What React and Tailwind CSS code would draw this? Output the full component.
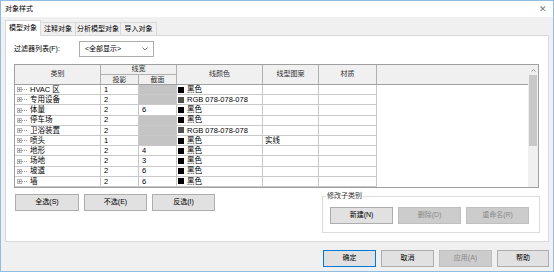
import React from "react";

const rows = [
  { name: "HVAC 区", proj: "1", cut: null, color: "黑色", sw: "#000", pattern: "" },
  { name: "专用设备", proj: "2", cut: null, color: "RGB 078-078-078", sw: "#4e4e4e", pattern: "" },
  { name: "体量", proj: "2", cut: "6", color: "黑色", sw: "#000", pattern: "" },
  { name: "停车场", proj: "2", cut: null, color: "黑色", sw: "#000", pattern: "" },
  { name: "卫浴装置", proj: "2", cut: null, color: "RGB 078-078-078", sw: "#4e4e4e", pattern: "" },
  { name: "喷头", proj: "1", cut: null, color: "黑色", sw: "#000", pattern: "实线" },
  { name: "地形", proj: "2", cut: "4", color: "黑色", sw: "#000", pattern: "" },
  { name: "场地", proj: "2", cut: "3", color: "黑色", sw: "#000", pattern: "" },
  { name: "坡道", proj: "2", cut: "6", color: "黑色", sw: "#000", pattern: "" },
  { name: "墙", proj: "2", cut: "6", color: "黑色", sw: "#000", pattern: "" },
];

const Btn = ({ children, w = "w-[64px]", disabled, focused }) => (
  <div
    className={`${w} h-[17px] flex items-center justify-center border text-[7px] ${
      disabled
        ? "bg-[#cccccc] border-[#bfbfbf] text-[#8a8a8a]"
        : focused
        ? "bg-[#e1e1e1] border-[#0078d7] text-black"
        : "bg-[#e1e1e1] border-[#adadad] text-black"
    }`}
  >
    {children}
  </div>
);

const Expander = () => (
  <div className="flex items-center ml-[2px] mr-[3px]">
    <div className="w-[5px] h-[5px] border border-[#b8b8b8] relative bg-white">
      <div className="absolute left-[0px] top-[1px] w-[3px] h-px bg-[#9a9a9a]" />
      <div className="absolute left-[1px] top-[0px] w-px h-[3px] bg-[#9a9a9a]" />
    </div>
    <div className="w-[5px] border-t border-dotted border-[#a0a0a0]" />
  </div>
);

export default function App() {
  return (
    <div className="w-[554px] h-[272px] border border-[#8fbde6] bg-[#f0f0f0] flex flex-col font-['Liberation_Sans','Noto_Sans_CJK_SC',sans-serif] text-black overflow-hidden">
      {/* title bar */}
      <div className="h-[16px] bg-white flex items-center justify-between pl-[4px] pr-[6px] shrink-0">
        <span className="text-[7px]">对象样式</span>
        <span className="text-[9px] text-[#777] leading-none">✕</span>
      </div>

      {/* tabs */}
      <div className="pt-[3px] px-[4px] flex items-end h-[18px] shrink-0 text-[7px]">
        <div className="w-[36px] h-[16px] bg-white border border-b-0 border-[#d9d9d9] flex items-center justify-center relative top-px z-10">模型对象</div>
        <div className="w-[35px] h-[13px] border border-l-0 border-b-0 border-[#d9d9d9] flex items-center justify-center">注释对象</div>
        <div className="w-[45px] h-[13px] border border-l-0 border-b-0 border-[#d9d9d9] flex items-center justify-center">分析模型对象</div>
        <div className="w-[36px] h-[13px] border border-l-0 border-b-0 border-[#d9d9d9] flex items-center justify-center">导入对象</div>
      </div>

      {/* tab panel */}
      <div className="mx-[4px] h-[207px] bg-white border border-[#d9d9d9] shrink-0 pl-[8px] pt-[5px] flex flex-col">
        <div className="flex items-center h-[16px]">
          <span className="w-[65px] text-[7px]">过滤器列表(F):</span>
          <div className="w-[75px] h-[16px] border border-[#acacac] bg-white flex items-center justify-between pl-[5px] pr-[5px] text-[7px]">
            <span>&lt;全部显示&gt;</span>
            <svg width="6" height="4" viewBox="0 0 6 4">
              <path d="M0.5 0.5 L3 3 L5.5 0.5" stroke="#555" strokeWidth="0.8" fill="none" />
            </svg>
          </div>
        </div>

        {/* table */}
        <div className="mt-[7px] w-[525px] h-[124px] border border-[#a0a0a0] flex text-[7.5px]">
          <div className="w-[513px] flex flex-col">
            {/* header */}
            <div className="flex h-[20px] bg-[#f0f0f0] border-b border-[#a0a0a0] shrink-0 text-[7px] text-[#333]">
              <div className="w-[86px] border-r border-[#b0b0b0] flex items-center justify-center">类别</div>
              <div className="w-[76px] border-r border-[#b0b0b0] flex flex-col">
                <div className="h-[10px] border-b border-[#b0b0b0] flex items-center justify-center">线宽</div>
                <div className="flex flex-1">
                  <div className="w-[38px] border-r border-[#b0b0b0] flex items-center justify-center">投影</div>
                  <div className="flex-1 flex items-center justify-center">截面</div>
                </div>
              </div>
              <div className="w-[86px] border-r border-[#b0b0b0] flex items-center justify-center">线颜色</div>
              <div className="w-[56px] border-r border-[#b0b0b0] flex items-center justify-center">线型图案</div>
              <div className="w-[58px] border-r border-[#b0b0b0] flex items-center justify-center">材质</div>
              <div className="flex-1" />
            </div>
            {/* body */}
            {rows.map((r, i) => (
              <div key={i} className="flex h-[10.4px] leading-none">
                <div className="w-[86px] border-r border-b border-[#c8c8c8] flex items-center">
                  <Expander />
                  <span>{r.name}</span>
                </div>
                <div className="w-[38px] border-r border-b border-[#c8c8c8] flex items-center pl-[3px]">{r.proj}</div>
                <div className={`w-[38px] border-r border-b border-[#c8c8c8] flex items-center pl-[3px] ${r.cut ? "" : "bg-[#c4c4c4]"}`}>
                  {r.cut}
                </div>
                <div className="w-[86px] border-r border-b border-[#c8c8c8] flex items-center">
                  <div className="w-[6px] h-[6px] ml-px mr-[3px]" style={{ backgroundColor: r.sw }} />
                  <span>{r.color}</span>
                </div>
                <div className="w-[56px] border-r border-b border-[#c8c8c8] flex items-center pl-[2px]">{r.pattern}</div>
                <div className="w-[58px] border-r border-b border-[#c8c8c8]" />
                <div className="flex-1" />
              </div>
            ))}
          </div>
          {/* scrollbar */}
          <div className="w-[10px] flex flex-col bg-[#f0f0f0]">
            <div className="h-[10px] flex items-center justify-center">
              <svg width="5" height="3" viewBox="0 0 5 3">
                <path d="M0.5 2.5 L2.5 0.5 L4.5 2.5" stroke="#7a7a7a" strokeWidth="0.8" fill="none" />
              </svg>
            </div>
            <div className="h-[71px] mx-px bg-[#c8c8c8]" />
          </div>
        </div>

        {/* bottom section */}
        <div className="flex mt-[6px]">
          <div className="flex gap-[5px] ml-px">
            <Btn>全选(S)</Btn>
            <Btn w="w-[63px]">不选(E)</Btn>
            <Btn w="w-[63px]">反选(I)</Btn>
          </div>
          <div className="ml-[107px] mt-[2px] w-[218px] h-[37px] border border-[#dcdcdc] relative pl-[7px] pt-[10px]">
            <span className="absolute left-[3px] -top-[6px] bg-white px-px text-[7px] text-[#333]">修改子类别</span>
            <div className="flex gap-[5px]">
              <Btn w="w-[63px]">新建(N)</Btn>
              <Btn w="w-[63px]" disabled>删除(D)</Btn>
              <Btn w="w-[63px]" disabled>重命名(R)</Btn>
            </div>
          </div>
        </div>
      </div>

      {/* dialog buttons */}
      <div className="flex justify-end gap-[5px] pr-[4px] mt-[8px]">
        <Btn w="w-[53px]" focused>确定</Btn>
        <Btn w="w-[53px]">取消</Btn>
        <Btn w="w-[53px]" disabled>应用(A)</Btn>
        <Btn w="w-[52px]">帮助</Btn>
      </div>
    </div>
  );
}
